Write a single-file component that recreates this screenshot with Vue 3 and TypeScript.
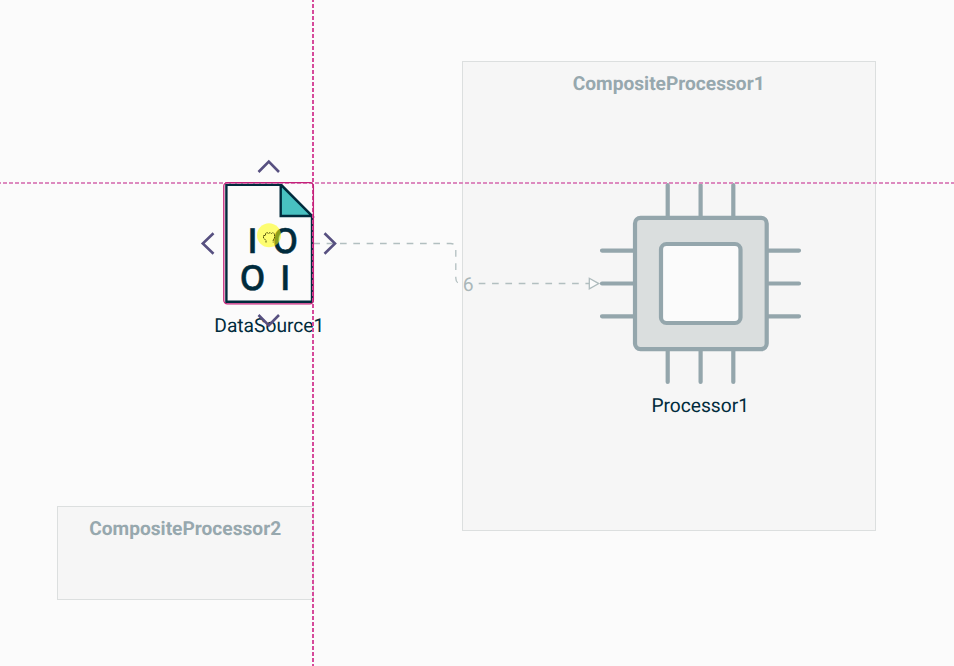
<script setup lang="ts">
interface Composite { name: string; x: number; y: number; width: number; height: number; labelX: number }

const composites: Composite[] = [
  { name: 'CompositeProcessor1', x: 462.5, y: 61.5, width: 413, height: 469, labelX: 668.7 },
  { name: 'CompositeProcessor2', x: 57.5, y: 506.5, width: 256, height: 93, labelX: 185.2 },
]

const pinColumns: number[] = [667.7, 700.6, 733.3]
const pinRows: number[] = [250.6, 283.5, 316.3]
</script>

<template>
  <svg class="canvas" width="954" height="666" viewBox="0 0 954 666">
    <g v-for="c in composites" :key="c.name">
      <rect class="composite" :x="c.x" :y="c.y" :width="c.width" :height="c.height" />
      <text class="title" :x="c.labelX" :y="c.y + 28.7" textLength="192" lengthAdjust="spacingAndGlyphs">{{ c.name }}</text>
    </g>

    <g class="processor">
      <path v-for="x in pinColumns" :key="'c' + x" :d="`M${x} 185V218M${x} 350V382`" />
      <path v-for="y in pinRows" :key="'r' + y" :d="`M602 ${y}H635M767 ${y}H799`" />
      <rect class="chip" x="635" y="217.9" width="131.7" height="131.2" rx="5.5" />
      <rect class="core" x="661" y="244" width="79.5" height="79" rx="5.5" />
    </g>
    <text class="label" x="700.2" y="412" textLength="97.6" lengthAdjust="spacingAndGlyphs">Processor1</text>

    <path class="edge" d="M313.3 243.5H450.5Q455.8 243.5 455.8 248.8V278Q455.8 283.5 461 283.5" />
    <path class="edge" d="M478.7 283.5H589" />
    <path class="arrow" d="M589.3 278.3L598.8 283.6L589.3 288.9Z" />
    <text class="count" x="468.2" y="291">6</text>

    <path class="page" d="M226.4 184.7H281L312 216V301.8H226.4Z" />
    <path class="fold" d="M280.7 184.7V216H312Z" />
    <g class="bits">
      <text x="252.6" y="253">I</text>
      <text x="285.3" y="253" textLength="25.5" lengthAdjust="spacingAndGlyphs">O</text>
      <text x="252.6" y="290" textLength="25.5" lengthAdjust="spacingAndGlyphs">O</text>
      <text x="285.3" y="290">I</text>
    </g>
    <text class="label" x="269.3" y="332" textLength="110" lengthAdjust="spacingAndGlyphs">DataSource1</text>
    <path class="guide horizontal" d="M-3 183H954" />
    <path class="guide" d="M313 -2V666" />
    <rect class="selection" x="223.8" y="182.6" width="89.6" height="121.2" rx="3.5" />

    <g class="handles">
      <path d="M258.5 172L268.8 161.5L279 172" />
      <path d="M258.5 315L268.8 325.3L279 315" />
      <path d="M213.5 233.3L202.8 243.5L213.5 253.7" />
      <path d="M324.5 233.3L335 243.5L324.5 253.7" />
    </g>

    <circle class="pointer" cx="269" cy="235.3" r="12" />
    <path class="hand" d="M266 242.5V240.5L263.5 238V235.5H265.5V233.5L267 232.5L268.5 233.5L270 232.5L271.5 233.5L273 232.5L274.5 234V238L273.2 240V242.5" />
  </svg>
</template>

<style>
body { background: #fbfbfb; }
</style>

<style scoped>
.canvas { display: block; font-family: Roboto, sans-serif; text-rendering: geometricPrecision; }
.canvas text { text-anchor: middle; }
.composite { fill: #f6f6f6; stroke: #dcdfdf; }
.title { font-size: 19.3px; font-weight: 700; fill: #97a8ae; }
.label { font-size: 19.3px; fill: #002b3c; }
.count { font-size: 19.3px; fill: #aab7b9; }
.processor { fill: none; stroke: #94a6ac; stroke-width: 4.2; stroke-linecap: round; }
.chip { fill: #dadede; }
.core { fill: #fbfbfb; }
.edge { fill: none; stroke: #b2bfc0; stroke-width: 1.3; stroke-dasharray: 6.67 6.67; }
.arrow { fill: #fbfbfb; stroke: #aebbbd; stroke-width: 1.3; }
.page { fill: #fbfbfb; stroke: #002b3c; stroke-width: 2.4; }
.fold { fill: #48c1c1; stroke: #002b3c; stroke-width: 2.4; }
.bits { font-family: "Open Sans", sans-serif; font-size: 34.5px; font-weight: 600; fill: #002b3c; stroke: #002b3c; stroke-width: 0.5; }
.guide { fill: none; stroke: #d64a9b; stroke-width: 2; stroke-dasharray: 4 2; }
.horizontal { stroke: #dd8abf; }
.selection { fill: none; stroke: #c42179; stroke-width: 1.3; }
.handles { fill: none; stroke: #575080; stroke-width: 2.6; }
.pointer { fill: #ffff00; fill-opacity: 0.55; }
.hand { fill: none; stroke: #55550d; stroke-width: 1; stroke-dasharray: 2 0.6; }
</style>
